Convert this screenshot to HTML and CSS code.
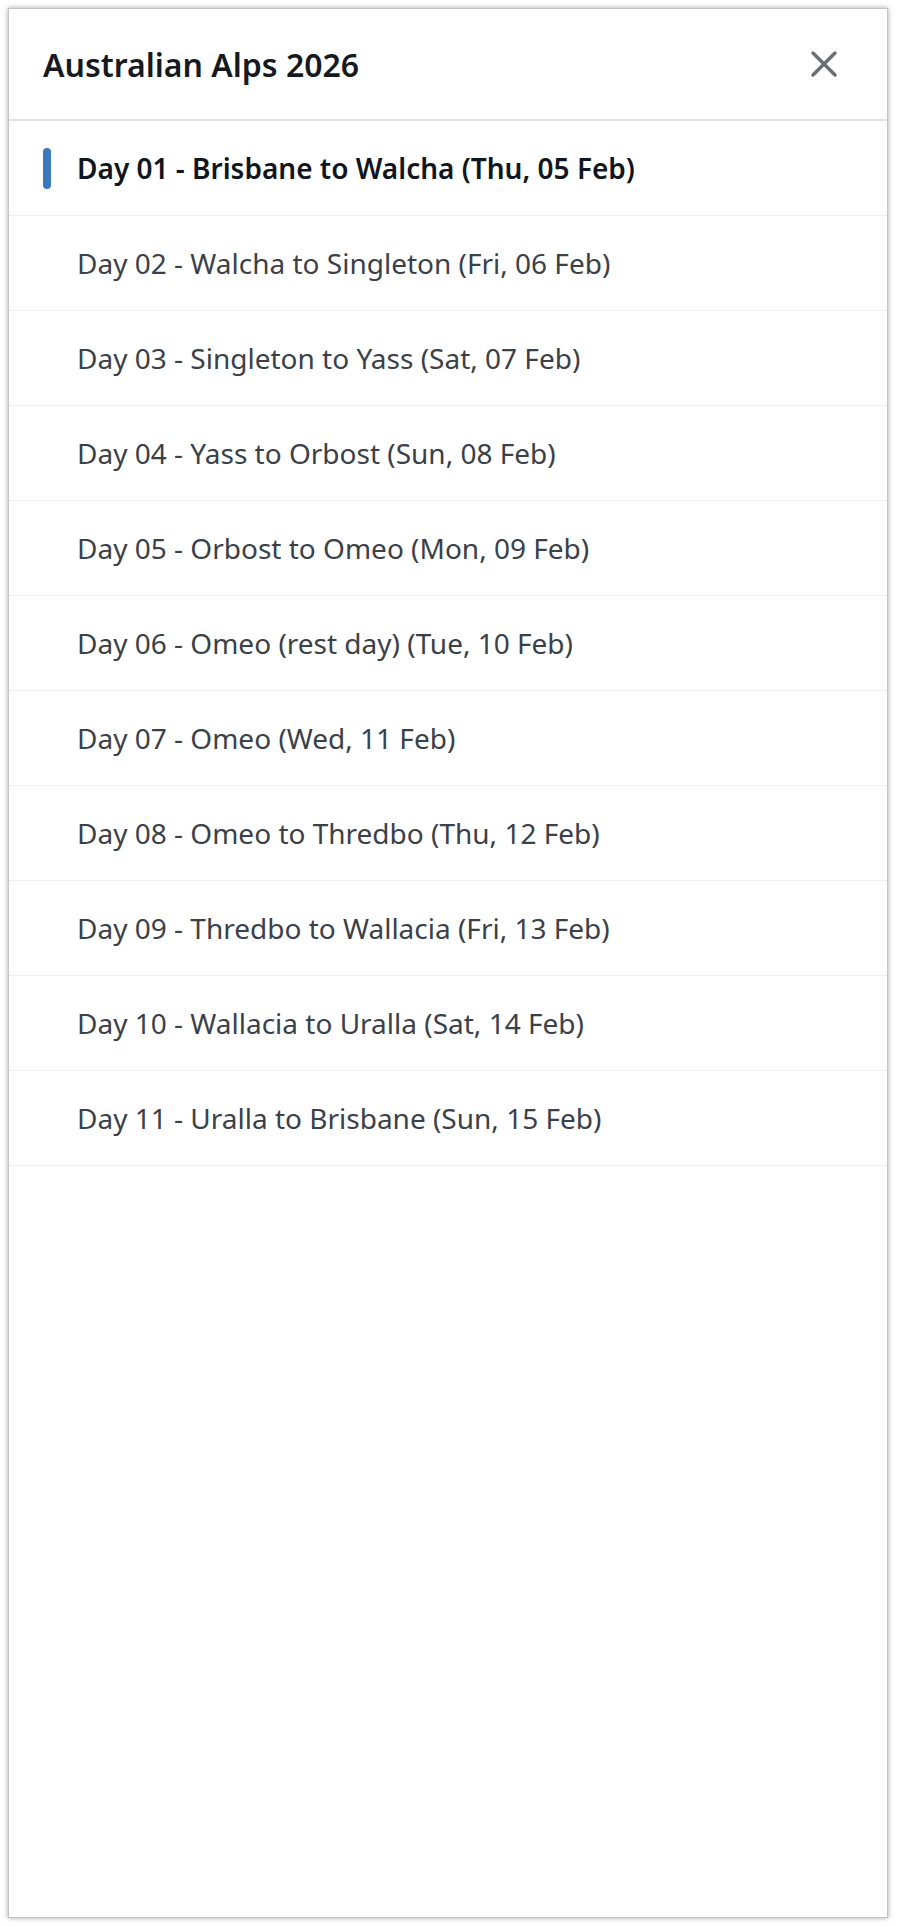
FILE: index.html
```html
<!DOCTYPE html>
<html lang="en">
<head>
<meta charset="utf-8">
<title>Australian Alps 2026</title>
<link rel="stylesheet" href="styles.css">
</head>
<body>
<aside class="panel">
  <header class="panel-header">
    <h1 class="panel-title">Australian Alps 2026</h1>
    <button class="close-btn" aria-label="Close">
      <svg viewBox="0 0 26 26" width="26" height="26" aria-hidden="true">
        <path d="M2 2 L24 24 M24 2 L2 24" fill="none" stroke="currentColor" stroke-width="3.4" stroke-linecap="round"/>
      </svg>
    </button>
  </header>
  <ul class="day-list">
    <li class="day-item active">Day 01 - Brisbane to Walcha (Thu, 05 Feb)</li>
    <li class="day-item">Day 02 - Walcha to Singleton (Fri, 06 Feb)</li>
    <li class="day-item">Day 03 - Singleton to Yass (Sat, 07 Feb)</li>
    <li class="day-item">Day 04 - Yass to Orbost (Sun, 08 Feb)</li>
    <li class="day-item">Day 05 - Orbost to Omeo (Mon, 09 Feb)</li>
    <li class="day-item">Day 06 - Omeo (rest day) (Tue, 10 Feb)</li>
    <li class="day-item">Day 07 - Omeo (Wed, 11 Feb)</li>
    <li class="day-item">Day 08 - Omeo to Thredbo (Thu, 12 Feb)</li>
    <li class="day-item">Day 09 - Thredbo to Wallacia (Fri, 13 Feb)</li>
    <li class="day-item">Day 10 - Wallacia to Uralla (Sat, 14 Feb)</li>
    <li class="day-item">Day 11 - Uralla to Brisbane (Sun, 15 Feb)</li>
  </ul>
</aside>
</body>
</html>
```

FILE: styles.css
```css
* { box-sizing: border-box; }

html, body {
  margin: 0;
  padding: 0;
  background: #ffffff;
}

body {
  padding: 8px 9px 9px 8px;
  font-family: "Noto Sans", "Open Sans", "Liberation Sans", sans-serif;
}

.panel {
  height: 1910px;
  background: #ffffff;
  border: 1px solid #c4c4c4;
  box-shadow: 0 0 5px rgba(0, 0, 0, 0.35);
  display: flex;
  flex-direction: column;
}

.panel-header {
  height: 112px;
  flex: none;
  display: flex;
  align-items: center;
  justify-content: space-between;
  padding: 0 50px 0 34px;
  border-bottom: 2px solid #e2e2e2;
}

.panel-title {
  margin: 0;
  font-size: 32px;
  font-weight: 600;
  color: #151a1f;
  letter-spacing: 0;
}

.close-btn {
  border: 0;
  background: transparent;
  padding: 0;
  width: 26px;
  height: 26px;
  color: #6b6f74;
  display: flex;
  cursor: pointer;
}

.day-list {
  list-style: none;
  margin: 0;
  padding: 0;
}

.day-item {
  position: relative;
  height: 95px;
  display: flex;
  align-items: center;
  padding-left: 68px;
  border-bottom: 1px solid #f0f0f0;
  font-size: 28px;
  color: #3a4149;
}

.day-item.active {
  font-weight: 600;
  color: #0f1620;
}

.day-item.active::before {
  content: "";
  position: absolute;
  left: 34px;
  top: 27px;
  width: 8px;
  height: 41px;
  border-radius: 4px;
  background: #3a79bd;
}
```
